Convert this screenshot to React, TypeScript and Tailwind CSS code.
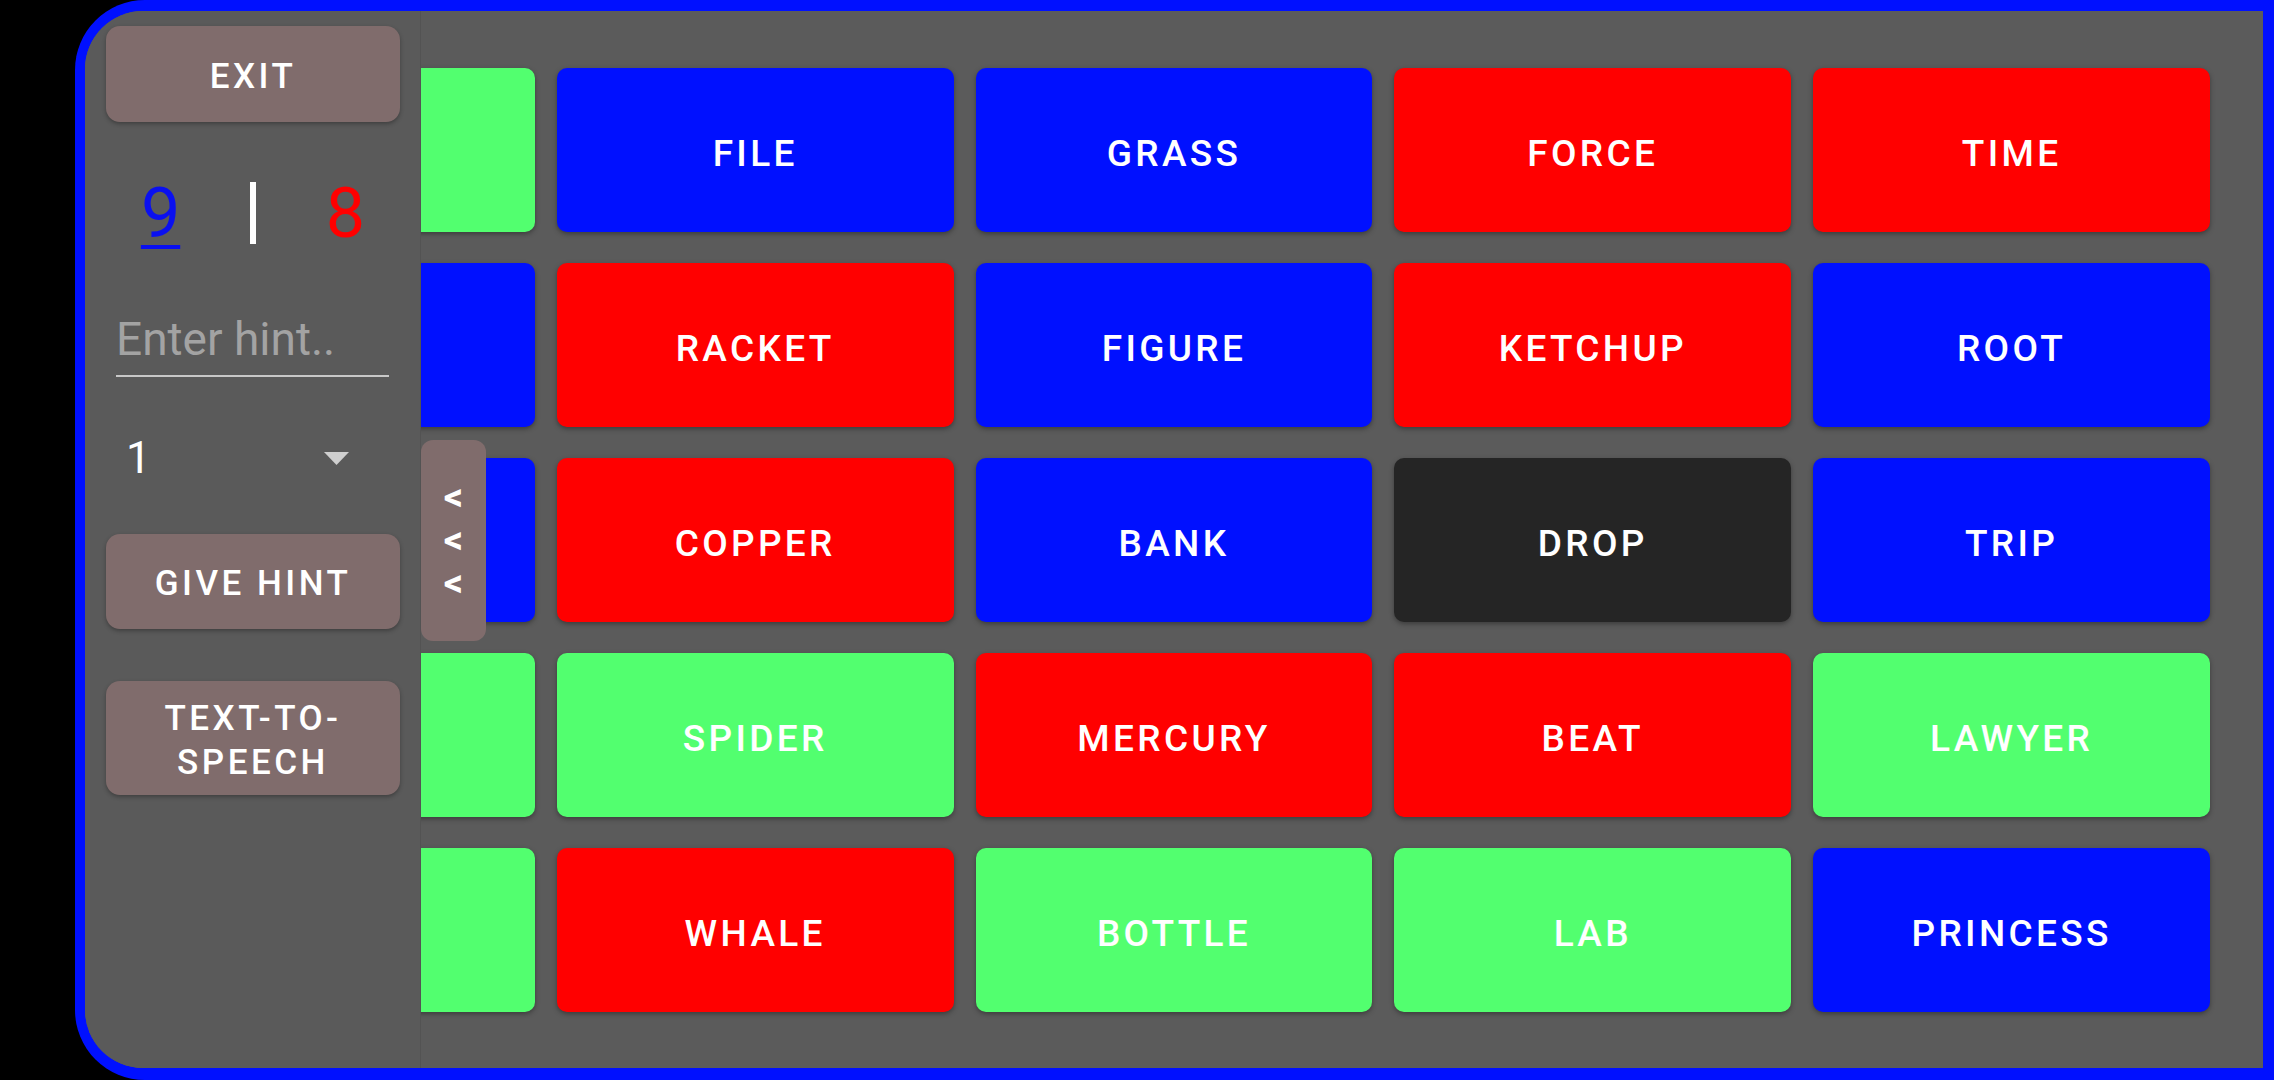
import { useState } from "react";

type Team = "red" | "blue" | "green" | "black";

const colorClass: Record<Team, string> = {
  red: "bg-[#ff0000]",
  blue: "bg-[#0010ff]",
  green: "bg-[#52ff6f]",
  black: "bg-[#252525]",
};

// board words, row by row (first column sits under the drawer)
const board: [string, Team][] = [
  ["NIGHT", "green"], ["FILE", "blue"], ["GRASS", "blue"], ["FORCE", "red"], ["TIME", "red"],
  ["PLANE", "blue"], ["RACKET", "red"], ["FIGURE", "blue"], ["KETCHUP", "red"], ["ROOT", "blue"],
  ["SHARK", "blue"], ["COPPER", "red"], ["BANK", "blue"], ["DROP", "black"], ["TRIP", "blue"],
  ["MOUSE", "green"], ["SPIDER", "green"], ["MERCURY", "red"], ["BEAT", "red"], ["LAWYER", "green"],
  ["CROWN", "green"], ["WHALE", "red"], ["BOTTLE", "green"], ["LAB", "green"], ["PRINCESS", "blue"],
];

function ActionButton({ label, className = "" }: { label: React.ReactNode; className?: string }) {
  return (
    <button
      className={
        "w-[294px] ml-[21px] pt-[5px] rounded-[14px] bg-[#806c6c] text-white font-medium text-[35px] leading-[44px] tracking-[0.1em] uppercase shadow-[0_2px_4px_rgba(0,0,0,0.3)] flex flex-col items-center justify-center " +
        className
      }
    >
      {label}
    </button>
  );
}

export default function App() {
  const [hint, setHint] = useState("");
  const [count, setCount] = useState("1");

  return (
    <div className="w-[2274px] h-[1080px] bg-black flex overflow-hidden" style={{ fontFamily: "Roboto, 'Noto Sans', sans-serif" }}>
      <div className="w-[75px] shrink-0" />
      <div className="flex-1 bg-[#0010ff] rounded-l-[70px] pt-[11px] pl-[10px] pr-[11px] pb-[12px] flex">
        <div className="relative flex-1 bg-[#5b5b5b] rounded-l-[58px] overflow-hidden">
          {/* board */}
          <div className="grid grid-cols-5 gap-x-[22px] gap-y-[31px] px-[53px] pt-[57px] pb-[57px]">
            {board.map(([word, team], i) => (
              <div
                key={i}
                className={`${colorClass[team]} h-[164px] pt-[7px] rounded-[10px] flex items-center justify-center text-white font-medium text-[37px] tracking-[0.09em] shadow-[0_2px_5px_rgba(0,0,0,0.35)]`}
              >
                {word}
              </div>
            ))}
          </div>

          {/* drawer */}
          <aside className="absolute left-0 top-0 bottom-0 w-[336px] bg-[#5a5a5a] border-r border-[#535353] flex flex-col">
            <ActionButton label="EXIT" className="mt-[15px] h-[96px]" />

            <div className="mt-[50px] ml-[21px] w-[294px] flex justify-around items-center text-[70px] leading-[82px]">
              <span className="text-[#0a10f0] underline decoration-[4px] underline-offset-[8px]">9</span>
              <span className="w-[6px] h-[62px] bg-white" />
              <span className="text-[#ff0000]">8</span>
            </div>

            <div className="mt-[58px] mx-[31px] border-b-2 border-[#c8c8c8] pb-[9px]">
              <input
                value={hint}
                onChange={(e) => setHint(e.target.value)}
                placeholder="Enter hint.."
                className="w-full h-[54px] bg-transparent text-[46px] text-white placeholder:text-[#a3a3a3] outline-none"
              />
            </div>

            <div className="mt-[51px] h-[60px] pl-[41px] pr-[71px] flex items-center justify-between text-[44px] text-white">
              <span>{count}</span>
              <svg width="25" height="13" viewBox="0 0 25 13" onClick={() => setCount(count)}>
                <path d="M0 0 L25 0 L12.5 13 Z" fill="#cfcfcf" />
              </svg>
            </div>

            <ActionButton label="GIVE HINT" className="mt-[46px] h-[95px]" />
            <ActionButton
              label={
                <>
                  <span className="block leading-[44px]">TEXT-TO-</span>
                  <span className="block leading-[44px]">SPEECH</span>
                </>
              }
              className="mt-[52px] h-[114px]"
            />
          </aside>

          {/* drawer toggle tab */}
          <button className="absolute left-[336px] top-[429px] w-[65px] h-[201px] rounded-[12px] bg-[#806c6c] flex flex-col items-center justify-center gap-[6px] text-white font-bold text-[38px] leading-[37px]">
            <span>&lt;</span>
            <span>&lt;</span>
            <span>&lt;</span>
          </button>
        </div>
      </div>
    </div>
  );
}
